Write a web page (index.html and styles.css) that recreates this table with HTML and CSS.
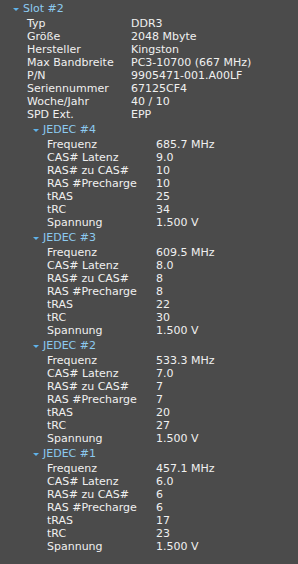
FILE: index.html
```html
<!DOCTYPE html>
<html>
	<head>
		<meta charset="utf-8">
		<title>Slot #2</title>
		<link rel="stylesheet" href="styles.css">
	</head>
	<body>
		<div class="tree">
			<div class="node slot">
				<span class="arrow"></span>Slot #2
			</div>
			<dl class="props">
				<dt>Typ</dt><dd>DDR3</dd>
				<dt>Größe</dt><dd>2048 Mbyte</dd>
				<dt>Hersteller</dt><dd>Kingston</dd>
				<dt>Max Bandbreite</dt><dd>PC3-10700 (667 MHz)</dd>
				<dt>P/N</dt><dd>9905471-001.A00LF</dd>
				<dt>Seriennummer</dt><dd>67125CF4</dd>
				<dt>Woche/Jahr</dt><dd>40 / 10</dd>
				<dt>SPD Ext.</dt><dd>EPP</dd>
			</dl>

			<div class="node jedec"><span class="arrow"></span>JEDEC #4</div>
			<dl class="props sub">
				<dt>Frequenz</dt><dd>685.7 MHz</dd>
				<dt>CAS# Latenz</dt><dd>9.0</dd>
				<dt>RAS# zu CAS#</dt><dd>10</dd>
				<dt>RAS #Precharge</dt><dd>10</dd>
				<dt>tRAS</dt><dd>25</dd>
				<dt>tRC</dt><dd>34</dd>
				<dt>Spannung</dt><dd>1.500 V</dd>
			</dl>

			<div class="node jedec"><span class="arrow"></span>JEDEC #3</div>
			<dl class="props sub">
				<dt>Frequenz</dt><dd>609.5 MHz</dd>
				<dt>CAS# Latenz</dt><dd>8.0</dd>
				<dt>RAS# zu CAS#</dt><dd>8</dd>
				<dt>RAS #Precharge</dt><dd>8</dd>
				<dt>tRAS</dt><dd>22</dd>
				<dt>tRC</dt><dd>30</dd>
				<dt>Spannung</dt><dd>1.500 V</dd>
			</dl>

			<div class="node jedec"><span class="arrow"></span>JEDEC #2</div>
			<dl class="props sub">
				<dt>Frequenz</dt><dd>533.3 MHz</dd>
				<dt>CAS# Latenz</dt><dd>7.0</dd>
				<dt>RAS# zu CAS#</dt><dd>7</dd>
				<dt>RAS #Precharge</dt><dd>7</dd>
				<dt>tRAS</dt><dd>20</dd>
				<dt>tRC</dt><dd>27</dd>
				<dt>Spannung</dt><dd>1.500 V</dd>
			</dl>

			<div class="node jedec"><span class="arrow"></span>JEDEC #1</div>
			<dl class="props sub">
				<dt>Frequenz</dt><dd>457.1 MHz</dd>
				<dt>CAS# Latenz</dt><dd>6.0</dd>
				<dt>RAS# zu CAS#</dt><dd>6</dd>
				<dt>RAS #Precharge</dt><dd>6</dd>
				<dt>tRAS</dt><dd>17</dd>
				<dt>tRC</dt><dd>23</dd>
				<dt>Spannung</dt><dd>1.500 V</dd>
			</dl>
		</div>
	</body>
</html>
```

FILE: styles.css
```css
html, body, dl, dd{
	margin: 0;
	padding: 0;
}
body{
	background: #4b4b4b;
	color: #f0f0f0;
	font-family: "DejaVu Sans", Verdana, sans-serif;
	font-size: 11px;
	height: 564px;
	overflow: hidden;
}
/* tree nodes (Slot / JEDEC) */
.node{
	display: flex;
	align-items: center;
	height: 17px;
	color: #8ccaf0;
}
.slot{
	padding-left: 13px;
}
.jedec{
	padding-left: 33px;
}
.arrow{
	width: 0;
	height: 0;
	border-left: 3px solid transparent;
	border-right: 3px solid transparent;
	border-top: 3px solid #5fb2ea;
	margin-right: 4px;
	margin-top: 1px;
}
/* label / value rows */
.props{
	display: grid;
	grid-template-columns: 104px auto;
	grid-auto-rows: 13px;
	line-height: 13px;
	padding-left: 27px;
	white-space: nowrap;
}
.props.sub{
	grid-template-columns: 109px auto;
	padding-left: 47px;
}
```
